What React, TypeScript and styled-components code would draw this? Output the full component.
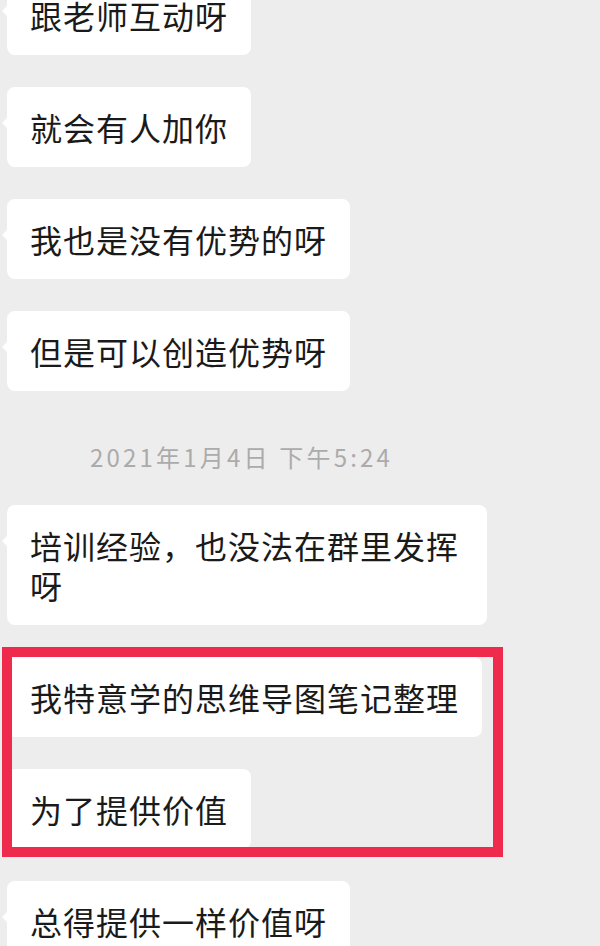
import { FC, ReactNode } from 'react'
import styled, { createGlobalStyle } from 'styled-components'

const GlobalStyle = createGlobalStyle`
  html, body {
    margin: 0;
    padding: 0;
    background: #ededed;
  }
  body {
    font-family: "Noto Sans CJK SC", "Noto Sans", sans-serif;
    overflow: hidden;
  }
`

const Screen = styled.div`
  width: 600px;
  height: 946px;
  overflow: hidden;
  background: #ededed;
`

const Thread = styled.div`
  display: flex;
  flex-direction: column;
  align-items: flex-start;
  gap: 32px;
  padding-left: 7px;
  margin-top: -25px;
`

const Bubble = styled.div`
  position: relative;
  box-sizing: border-box;
  max-width: 480px;
  padding: 20px 23px;
  background: #ffffff;
  border-radius: 8px;
  color: #1a1a1a;
  font-size: 32px;
  line-height: 40px;
  letter-spacing: 1px;

  &::before {
    content: '';
    position: absolute;
    left: -5px;
    top: 30px;
    border-style: solid;
    border-width: 6px 6px 6px 0;
    border-color: transparent #ffffff transparent transparent;
  }
`

const Stamp = styled.div`
  align-self: stretch;
  margin: 19px 0 1px;
  padding-left: 83px;
  color: #ababab;
  font-size: 24px;
  line-height: 30px;
  letter-spacing: 3.2px;
`

const Marked = styled.div`
  position: relative;
  display: flex;
  flex-direction: column;
  align-items: flex-start;
  gap: 32px;

  &::after {
    content: '';
    position: absolute;
    top: -10px;
    bottom: -8px;
    left: -5px;
    right: -21px;
    border: 10px solid #ee2a4d;
    pointer-events: none;
  }
`

const Msg: FC<{ children: ReactNode }> = ({ children }) => <Bubble>{children}</Bubble>

const App: FC = () => {
  return (
    <>
      <GlobalStyle />
      <Screen>
        <Thread>
          <Msg>跟老师互动呀</Msg>
          <Msg>就会有人加你</Msg>
          <Msg>我也是没有优势的呀</Msg>
          <Msg>但是可以创造优势呀</Msg>
          <Stamp>2021年1月4日 下午5:24</Stamp>
          <Msg>培训经验，也没法在群里发挥呀</Msg>
          <Marked>
            <Msg>我特意学的思维导图笔记整理</Msg>
            <Msg>为了提供价值</Msg>
          </Marked>
          <Msg>总得提供一样价值呀</Msg>
        </Thread>
      </Screen>
    </>
  )
}

export default App
